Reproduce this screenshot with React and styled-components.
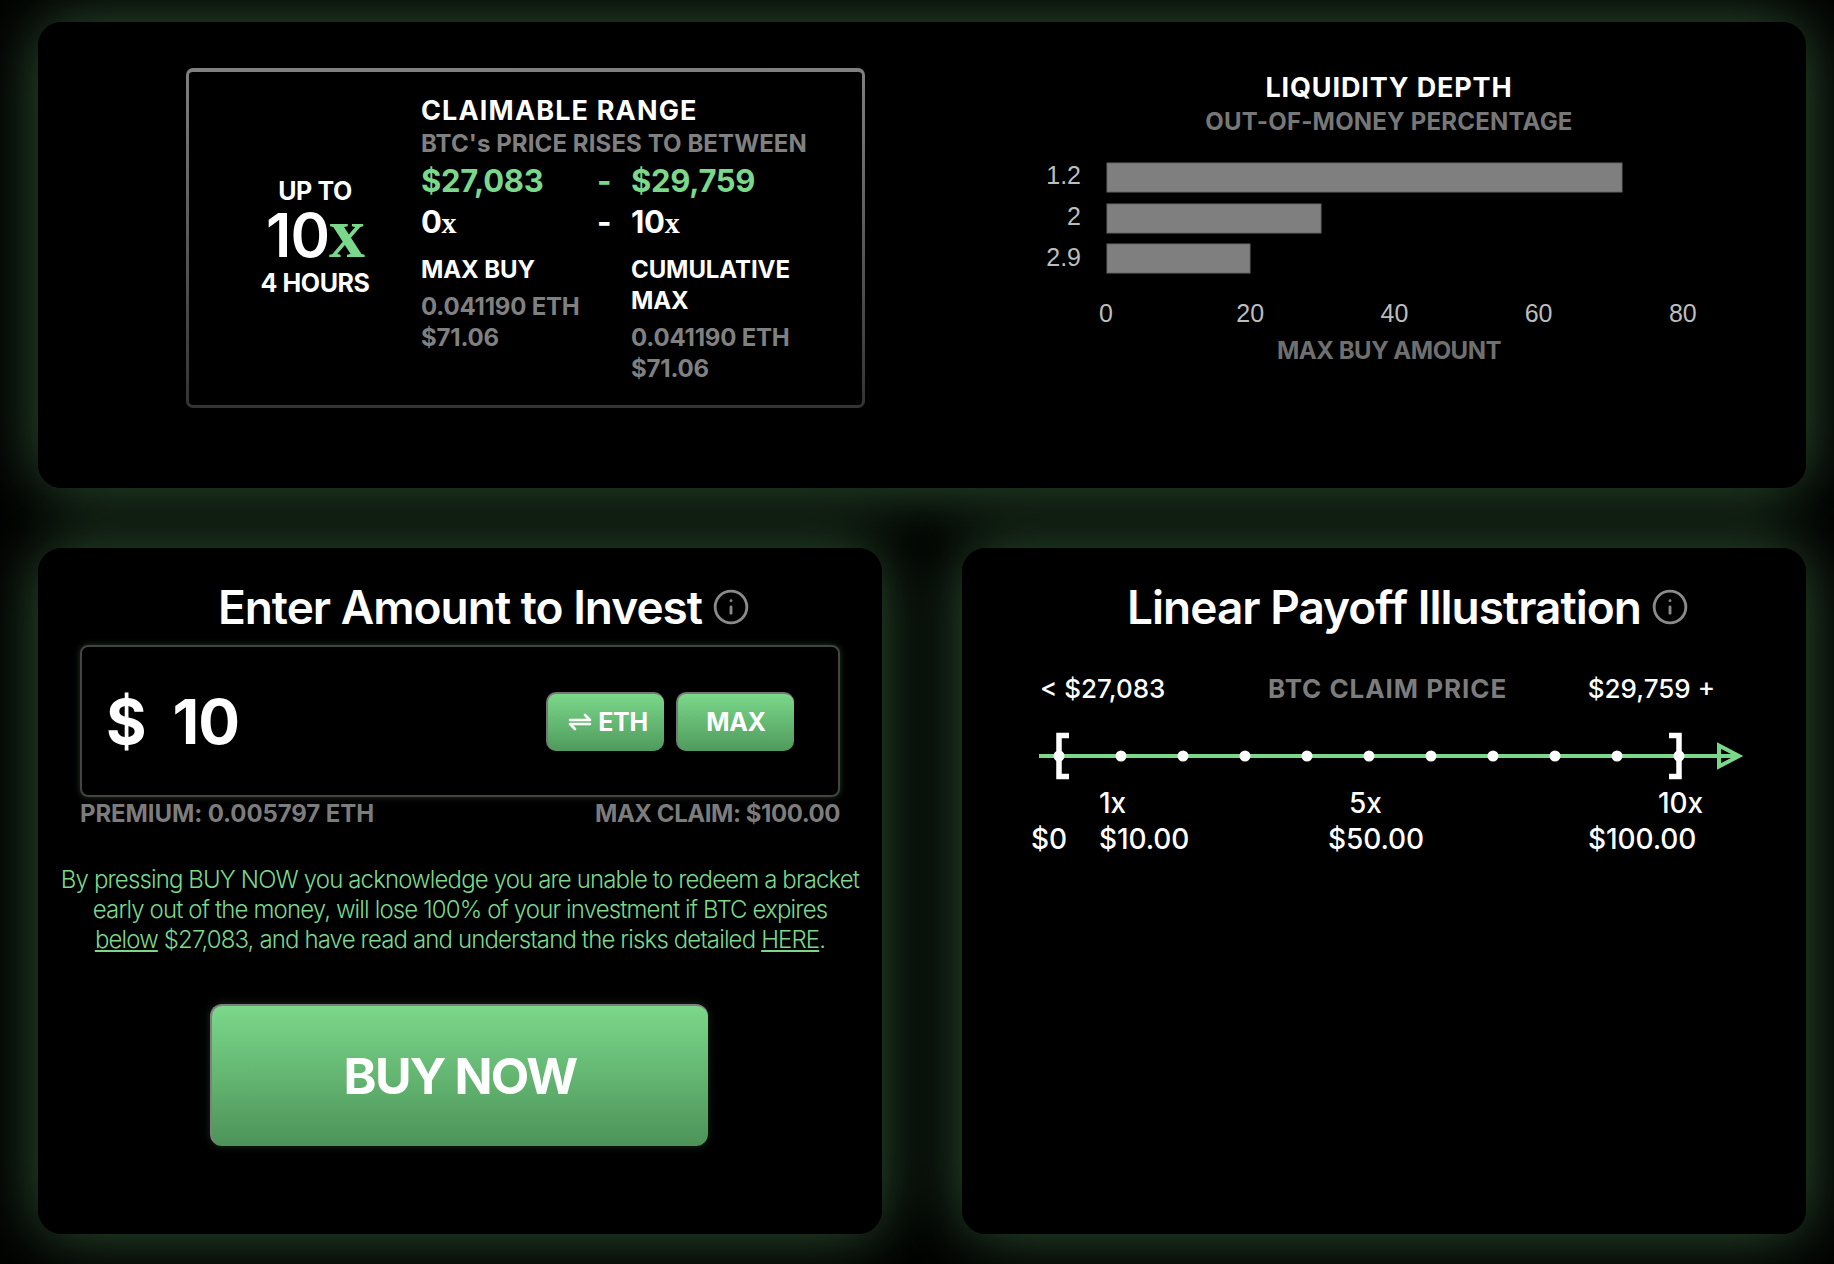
import React from 'react';
import styled, { createGlobalStyle } from 'styled-components';
import { Info } from 'lucide-react';

const GlobalStyle = createGlobalStyle`
    html, body { margin: 0; padding: 0; background: #000; }
    body { font-family: Inter, "Open Sans", sans-serif; color: #fff; }
`;

const Page = styled.main`
    isolation: isolate;
    width: 1834px;
    height: 1264px;
    box-sizing: border-box;
    overflow: hidden;
    padding: 22px 28px 30px 38px;
    display: grid;
    grid-template-columns: 844px 844px;
    grid-template-rows: 466px 686px;
    column-gap: 80px;
    row-gap: 60px;
    background: #000;
`;

const Panel = styled.section`
    position: relative;
    box-sizing: border-box;
    background: #000;
    border-radius: 24px;
    &::before {
        content: '';
        position: absolute;
        inset: 0;
        z-index: -1;
        border-radius: 24px;
        box-shadow: 0 0 66px rgba(125, 220, 135, 0.4);
    }
`;

const TopPanel = styled(Panel)`
    grid-column: 1 / 3;
    display: flex;
    align-items: flex-start;
    padding: 46px 0 0 148px;
`;

const RangeCard = styled.div`
    box-sizing: border-box;
    width: 679px;
    height: 340px;
    display: flex;
    padding: 23px 0 0 31px;
    border-radius: 7px;
    border: 3px solid transparent;
    border-top-width: 4px;
    background: linear-gradient(#000, #000) padding-box, linear-gradient(#808080, #333) border-box;
`;

const TermColumn = styled.div`
    width: 190px;
    margin-right: 11px;
    margin-top: -27px;
    display: flex;
    flex-direction: column;
    align-items: center;
    justify-content: center;
    font-weight: 700;
    font-size: 25px;
    letter-spacing: -0.4px;
`;

const TermMultiple = styled.div`
    font-size: 60px;
    line-height: 60px;
    margin: -3px 0 3px;
    letter-spacing: -1px;
    font-weight: 600;
`;

const SerifX = styled.span`
    font-family: "Liberation Serif", serif;
    font-weight: 700;
    color: ${(p) => (p.$green ? '#7bd88a' : '#fff')};
    font-size: ${(p) => p.$size}px;
`;

const RangeColumn = styled.div`
    display: flex;
    flex-direction: column;
`;

const CardHeading = styled.div`
    font-size: 27px;
    font-weight: 700;
    line-height: 31px;
    letter-spacing: 1.15px;
    white-space: nowrap;
`;

const CardSubheading = styled.div`
    font-size: 24px;
    font-weight: 700;
    line-height: 31px;
    margin-top: 2px;
    letter-spacing: 0.1px;
    color: #808080;
    white-space: nowrap;
`;

const PriceRow = styled.div`
    display: grid;
    grid-template-columns: 170px 40px 1fr;
    font-size: 31px;
    font-weight: 700;
    line-height: 40px;
    letter-spacing: -0.3px;
    color: ${(p) => (p.$green ? '#7bd88a' : '#fff')};
    margin-top: ${(p) => p.$top}px;
`;

const Dash = styled.span`
    padding-left: 6px;
`;

const StatsRow = styled.div`
    display: grid;
    grid-template-columns: 210px 1fr;
    margin-top: 11px;
`;

const StatLabel = styled.div`
    font-size: 24px;
    font-weight: 700;
    line-height: 31px;
    letter-spacing: -0.1px;
    margin-bottom: 6px;
`;

const StatValue = styled.div`
    font-size: 24px;
    font-weight: 700;
    line-height: 31px;
    letter-spacing: -0.2px;
    color: #808080;
`;

const DepthColumn = styled.div`
    width: 724px;
    margin-left: 162px;
    padding-top: 5px;
    text-align: center;
`;

const DepthTitle = styled.div`
    font-size: 27px;
    font-weight: 700;
    line-height: 30px;
    letter-spacing: 0.85px;
`;

const DepthSubtitle = styled.div`
    font-size: 24px;
    font-weight: 700;
    line-height: 30px;
    margin-top: 4px;
    letter-spacing: 0.2px;
    color: #777;
`;

const DepthChart = styled.svg`
    display: block;
    margin-top: 3px;
    text {
        font-family: "Liberation Sans", Arial, sans-serif;
        font-size: 25px;
        fill: #bdbdbd;
    }
    rect {
        fill: #7f7f7f;
        stroke: #666;
    }
`;

const AxisTitle = styled(DepthSubtitle)`
    margin-top: 6px;
    letter-spacing: -0.5px;
    color: #6f6f6f;
`;

const CardTitleRow = styled.h2`
    margin: 0;
    display: flex;
    align-items: center;
    justify-content: center;
    height: 48px;
    font-size: 46px;
    font-weight: 600;
    letter-spacing: -1px;
    color: #fff;
`;

const TitleText = styled.span`
    position: relative;
    svg {
        position: absolute;
        left: calc(100% + 10px);
        top: 50%;
        transform: translateY(-50%);
        color: #8a8a8a;
    }
`;

const InvestPanel = styled(Panel)`
    padding: 35px 42px 0;
    display: flex;
    flex-direction: column;
`;

const AmountBox = styled.div`
    box-sizing: border-box;
    height: 152px;
    margin-top: 14px;
    padding: 0 44px 0 24px;
    display: flex;
    align-items: center;
    justify-content: space-between;
    border: 2px solid #444;
    border-radius: 8px;
    box-shadow: 0 0 6px rgba(125, 220, 135, 0.25);
`;

const AmountText = styled.div`
    font-size: 62px;
    font-weight: 700;
    letter-spacing: -1px;
    display: flex;
    gap: 27px;
`;

const PillRow = styled.div`
    display: flex;
    gap: 12px;
`;

const Pill = styled.button`
    box-sizing: border-box;
    width: 118px;
    height: 59px;
    padding: 0 0 0 ${(p) => p.$pad || 0}px;
    border: 0;
    border-top: 2px solid #777;
    border-left: 2px solid #777;
    border-radius: 10px;
    background: linear-gradient(#7bd88a, #4f9a5c);
    color: #fff;
    font-family: inherit;
    font-size: 25px;
    font-weight: 700;
    letter-spacing: -0.3px;
    display: flex;
    align-items: center;
    justify-content: center;
    gap: 5px;
`;

const MetaRow = styled.div`
    display: flex;
    justify-content: space-between;
    margin-top: 1px;
    font-size: 24px;
    font-weight: 700;
    line-height: 31px;
    color: #7c7c7c;
`;

const MetaText = styled.span`
    letter-spacing: ${(p) => p.$spacing}px;
`;

const Disclaimer = styled.p`
    margin: 36px -30px 0;
    text-align: center;
    font-size: 24px;
    font-weight: 300;
    line-height: 30px;
    letter-spacing: -0.87px;
    color: #7bd88a;
    a { color: inherit; text-decoration: underline; }
`;

const BuyButton = styled.button`
    box-sizing: border-box;
    align-self: center;
    width: 498px;
    height: 142px;
    margin: 49px 0 0 -2px;
    border: 0;
    border-top: 2px solid #808080;
    border-left: 2px solid #808080;
    border-radius: 12px;
    background: linear-gradient(#7bd88a, #4c9358);
    box-shadow: 0 0 8px rgba(125, 220, 135, 0.2);
    color: #fff;
    font-family: inherit;
    font-size: 50px;
    font-weight: 700;
    letter-spacing: -1.8px;
`;

const PayoffPanel = styled(Panel)`
    padding: 35px 0 0 69px;
    display: flex;
    flex-direction: column;
`;

const PayoffTitle = styled(CardTitleRow)`
    margin-left: -69px;
`;

const PriceLabels = styled.div`
    width: 675px;
    margin: 40px 0 0 9px;
    display: flex;
    justify-content: space-between;
    font-size: 26px;
    font-weight: 500;
    line-height: 36px;
    letter-spacing: 0;
`;

const ClaimLabel = styled.span`
    margin-left: 22px;
    color: #7c7c7c;
    font-weight: 700;
    letter-spacing: 0.95px;
`;

const Timeline = styled.svg`
    display: block;
    margin: 25px 0 0 8px;
`;

const PayoffGrid = styled.div`
    display: grid;
    grid-template-columns: 68px 229px 260px auto;
    margin-top: 5px;
    font-size: 28px;
    font-weight: 500;
    line-height: 36px;
    letter-spacing: -0.1px;
`;

const GridCell = styled.span`
    padding-left: ${(p) => p.$indent || 0}px;
`;

const bars = [
    { label: '1.2', y: 23, width: 515, text: 44 },
    { label: '2', y: 64, width: 214, text: 85 },
    { label: '2.9', y: 104, width: 143, text: 126 },
];
const ticks = [0, 20, 40, 60, 80];
const dots = [1059, 1121, 1183, 1245, 1307, 1369, 1431, 1493, 1555, 1617, 1679];

function InfoIcon() {
    return <Info size={38} strokeWidth={1.8} />;
}

function SwapIcon() {
    return (
        <svg width="26" height="18" viewBox="0 0 26 18" fill="none" stroke="#fff" strokeWidth="2.6" strokeLinecap="round" strokeLinejoin="round">
            <path d="M3 7h20l-5-5" />
            <path d="M23 11H3l5 5" />
        </svg>
    );
}

function App() {
    return (
        <Page>
            <GlobalStyle />
            <TopPanel>
                <RangeCard>
                    <TermColumn>
                        <div>UP TO</div>
                        <TermMultiple>10<SerifX $green $size={72}>x</SerifX></TermMultiple>
                        <div>4 HOURS</div>
                    </TermColumn>
                    <RangeColumn>
                        <CardHeading>CLAIMABLE RANGE</CardHeading>
                        <CardSubheading>BTC's PRICE RISES TO BETWEEN</CardSubheading>
                        <PriceRow $green $top={2}>
                            <span>$27,083</span>
                            <Dash>-</Dash>
                            <span>$29,759</span>
                        </PriceRow>
                        <PriceRow $top={1}>
                            <span>0<SerifX $size={30}>x</SerifX></span>
                            <Dash>-</Dash>
                            <span>10<SerifX $size={30}>x</SerifX></span>
                        </PriceRow>
                        <StatsRow>
                            <div>
                                <StatLabel>MAX BUY</StatLabel>
                                <StatValue>0.041190 ETH</StatValue>
                                <StatValue>$71.06</StatValue>
                            </div>
                            <div>
                                <StatLabel>CUMULATIVE<br />MAX</StatLabel>
                                <StatValue>0.041190 ETH</StatValue>
                                <StatValue>$71.06</StatValue>
                            </div>
                        </StatsRow>
                    </RangeColumn>
                </RangeCard>
                <DepthColumn>
                    <DepthTitle>LIQUIDITY DEPTH</DepthTitle>
                    <DepthSubtitle>OUT-OF-MONEY PERCENTAGE</DepthSubtitle>
                    <DepthChart width="724" height="190" viewBox="0 0 724 190">
                        {bars.map((b) => (
                            <g key={b.label}>
                                <rect x="80" y={b.y} width={b.width} height="29" />
                                <text x="54" y={b.text} textAnchor="end">{b.label}</text>
                            </g>
                        ))}
                        {ticks.map((t, i) => (
                            <text key={t} x={79 + i * 144.2} y="182" textAnchor="middle">{t}</text>
                        ))}
                    </DepthChart>
                    <AxisTitle>MAX BUY AMOUNT</AxisTitle>
                </DepthColumn>
            </TopPanel>

            <InvestPanel>
                <CardTitleRow><TitleText>Enter Amount to Invest<InfoIcon /></TitleText></CardTitleRow>
                <AmountBox>
                    <AmountText><span>$</span><span>10</span></AmountText>
                    <PillRow>
                        <Pill $pad={3}><SwapIcon />ETH</Pill>
                        <Pill>MAX</Pill>
                    </PillRow>
                </AmountBox>
                <MetaRow>
                    <MetaText $spacing={-0.1}>PREMIUM: 0.005797 ETH</MetaText>
                    <MetaText $spacing={-0.45}>MAX CLAIM: $100.00</MetaText>
                </MetaRow>
                <Disclaimer>
                    By pressing BUY NOW you acknowledge you are unable to redeem a bracket<br />
                    early out of the money, will lose 100% of your investment if BTC expires<br />
                    <a href="#below">below</a> $27,083, and have read and understand the risks detailed <a href="#here">HERE</a>.
                </Disclaimer>
                <BuyButton>BUY NOW</BuyButton>
            </InvestPanel>

            <PayoffPanel>
                <PayoffTitle><TitleText>Linear Payoff Illustration<InfoIcon /></TitleText></PayoffTitle>
                <PriceLabels>
                    <span>&lt; $27,083</span>
                    <ClaimLabel>BTC CLAIM PRICE</ClaimLabel>
                    <span>$29,759 +</span>
                </PriceLabels>
                <Timeline width="706" height="48" viewBox="1039 732 706 48">
                    <path d="M1039 756H1735" stroke="#7bd88a" strokeWidth="4" />
                    <path d="M1719 745.5L1739 756L1719 766.5Z" fill="none" stroke="#7bd88a" strokeWidth="4" />
                    {dots.map((x) => <circle key={x} cx={x} cy="756" r="5.5" fill="#fff" />)}
                    <path d="M1069 735.5H1059V776.5H1069" fill="none" stroke="#fff" strokeWidth="5.5" />
                    <path d="M1669 735.5H1679V776.5H1669" fill="none" stroke="#fff" strokeWidth="5.5" />
                </Timeline>
                <PayoffGrid>
                    <span />
                    <GridCell>1x</GridCell>
                    <GridCell $indent={21}>5x</GridCell>
                    <GridCell $indent={70}>10x</GridCell>
                    <span>$0</span>
                    <span>$10.00</span>
                    <span>$50.00</span>
                    <span>$100.00</span>
                </PayoffGrid>
            </PayoffPanel>
        </Page>
    );
}

export default App;
